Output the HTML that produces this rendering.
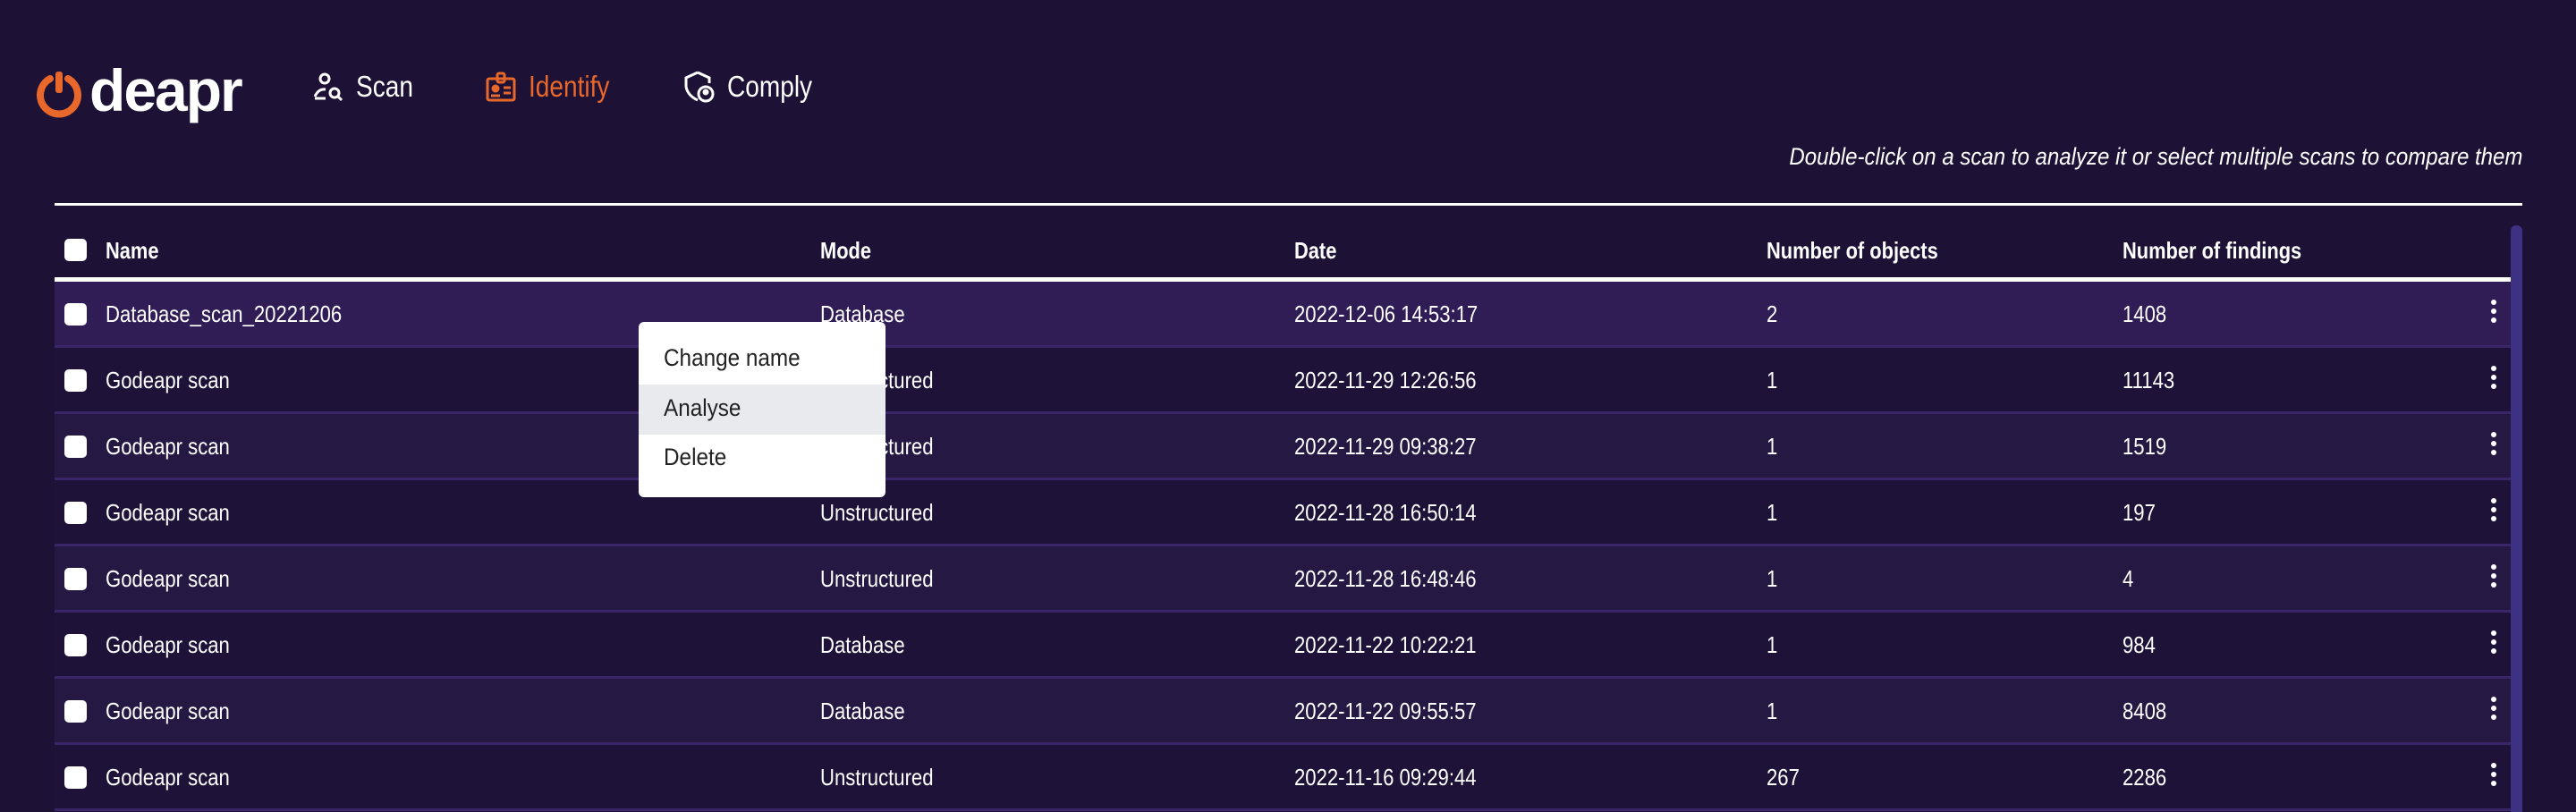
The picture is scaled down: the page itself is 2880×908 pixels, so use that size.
<!DOCTYPE html>
<html><head><meta charset="utf-8"><style>
*{margin:0;padding:0;box-sizing:border-box}
body{width:2880px;height:908px;overflow:hidden;background:#1d1235;font-family:"Liberation Sans Narrow","Liberation Sans",sans-serif;color:#fff;position:relative}
.abs{position:absolute}
.n{display:inline-block;transform:scaleX(.85);transform-origin:left center;white-space:nowrap}
.logo{top:68px;font-family:"Liberation Sans",sans-serif;font-weight:bold;font-size:66px;letter-spacing:-2px;line-height:66px}
.nav{top:76px;font-size:33px;line-height:42px;display:flex;align-items:center;gap:14px}
.hint{right:60px;top:160px;font-style:italic;font-size:27px;transform:scaleX(.89);transform-origin:right center;white-space:nowrap}
.topline{left:61px;top:227px;width:2759px;height:3px;background:#fff}
.hdr{top:262px;font-weight:bold;font-size:26px;line-height:36px;transform:scaleX(.84);transform-origin:left center;white-space:nowrap}
.hline{left:61px;top:310px;width:2746px;height:5px;background:#fff}
.row{position:absolute;left:61px;width:2746px;height:74px;border-bottom:3px solid #3a2568}
.row span{position:absolute;top:19px;font-size:26px;line-height:34px;transform:scaleX(.85);transform-origin:left center;white-space:nowrap}
.cb{position:absolute;left:11px;width:25px;height:25px;background:#fff;border-radius:5px}
.kb{position:absolute;left:2724px;top:20px;width:6px}
.kb i{display:block;width:6px;height:6px;border-radius:3px;background:#fff;margin-bottom:4px}
.menu{left:714px;top:360px;width:276px;height:196px;background:#fff;border-radius:6px;color:#222;font-size:27px}
.menu div{position:absolute;left:28px;transform:scaleX(.9);transform-origin:left center;white-space:nowrap}
</style></head><body>
<div class="abs" style="left:40px;top:76px"><svg width="52" height="56" viewBox="0 0 52 56"><path d="M16 12 A21 21 0 1 0 36 12" fill="none" stroke="#e8672a" stroke-width="8" stroke-linecap="round"/><rect x="22" y="4" width="8" height="24" rx="3" fill="#e8672a"/></svg></div>
<div class="abs logo" style="left:100px">deapr</div>
<div class="abs nav" style="left:350px"><svg width="34" height="34" viewBox="0 0 34 34" fill="none" stroke="#fff" stroke-width="3"><circle cx="13" cy="8" r="5"/><path d="M2 28 Q6 19 14 20"/><circle cx="24" cy="24" r="5"/><path d="M28 28 L32 32"/><path d="M2 30 L14 30"/></svg><span class="n">Scan</span></div>
<div class="abs nav" style="left:543px;color:#e8672a"><svg width="34" height="34" viewBox="0 0 34 34" fill="none" stroke="#e8672a" stroke-width="3"><rect x="2" y="8" width="30" height="24" rx="2"/><rect x="13" y="2" width="8" height="10" rx="2"/><circle cx="11" cy="19" r="3" fill="#e8672a"/><path d="M6 27 h10 M20 18 h8 M20 24 h8"/></svg><span class="n">Identify</span></div>
<div class="abs nav" style="left:765px"><svg width="34" height="36" viewBox="0 0 34 36" fill="none" stroke="#fff" stroke-width="3"><path d="M15 2 L28 8 V14 M15 2 L2 8 V18 Q4 28 15 33"/><circle cx="24" cy="26" r="8"/><circle cx="24" cy="24" r="2" fill="#fff"/></svg><span class="n">Comply</span></div>
<div class="abs hint">Double-click on a scan to analyze it or select multiple scans to compare them</div>
<div class="abs topline"></div>
<div class="abs" style="left:72px;top:267px;width:25px;height:25px;background:#fff;border-radius:5px"></div>
<div class="abs hdr" style="left:118px">Name</div>
<div class="abs hdr" style="left:917px">Mode</div>
<div class="abs hdr" style="left:1447px">Date</div>
<div class="abs hdr" style="left:1975px">Number of objects</div>
<div class="abs hdr" style="left:2373px">Number of findings</div>
<div class="abs hline"></div>
<div class="abs" style="left:2807px;top:252px;width:13px;height:656px;background:#3d3184;border-radius:6px 6px 0 0"></div>

<div class="row" style="top:315px;background:#301d55"><i class="cb" style="top:24px"></i><span style="left:57px">Database_scan_20221206</span><span style="left:856px">Database</span><span style="left:1386px">2022-12-06 14:53:17</span><span style="left:1914px">2</span><span style="left:2312px">1408</span><div class="kb"><i></i><i></i><i></i></div></div>
<div class="row" style="top:389px;background:#1e1238"><i class="cb" style="top:24px"></i><span style="left:57px">Godeapr scan</span><span style="left:856px">Unstructured</span><span style="left:1386px">2022-11-29 12:26:56</span><span style="left:1914px">1</span><span style="left:2312px">11143</span><div class="kb"><i></i><i></i><i></i></div></div>
<div class="row" style="top:463px;background:#251843"><i class="cb" style="top:24px"></i><span style="left:57px">Godeapr scan</span><span style="left:856px">Unstructured</span><span style="left:1386px">2022-11-29 09:38:27</span><span style="left:1914px">1</span><span style="left:2312px">1519</span><div class="kb"><i></i><i></i><i></i></div></div>
<div class="row" style="top:537px;background:#1e1238"><i class="cb" style="top:24px"></i><span style="left:57px">Godeapr scan</span><span style="left:856px">Unstructured</span><span style="left:1386px">2022-11-28 16:50:14</span><span style="left:1914px">1</span><span style="left:2312px">197</span><div class="kb"><i></i><i></i><i></i></div></div>
<div class="row" style="top:611px;background:#251843"><i class="cb" style="top:24px"></i><span style="left:57px">Godeapr scan</span><span style="left:856px">Unstructured</span><span style="left:1386px">2022-11-28 16:48:46</span><span style="left:1914px">1</span><span style="left:2312px">4</span><div class="kb"><i></i><i></i><i></i></div></div>
<div class="row" style="top:685px;background:#1e1238"><i class="cb" style="top:24px"></i><span style="left:57px">Godeapr scan</span><span style="left:856px">Database</span><span style="left:1386px">2022-11-22 10:22:21</span><span style="left:1914px">1</span><span style="left:2312px">984</span><div class="kb"><i></i><i></i><i></i></div></div>
<div class="row" style="top:759px;background:#251843"><i class="cb" style="top:24px"></i><span style="left:57px">Godeapr scan</span><span style="left:856px">Database</span><span style="left:1386px">2022-11-22 09:55:57</span><span style="left:1914px">1</span><span style="left:2312px">8408</span><div class="kb"><i></i><i></i><i></i></div></div>
<div class="row" style="top:833px;background:#1e1238"><i class="cb" style="top:24px"></i><span style="left:57px">Godeapr scan</span><span style="left:856px">Unstructured</span><span style="left:1386px">2022-11-16 09:29:44</span><span style="left:1914px">267</span><span style="left:2312px">2286</span><div class="kb"><i></i><i></i><i></i></div></div>

<div class="abs menu">
<div style="top:25px">Change name</div>
<div style="left:0;top:70px;width:276px;height:56px;background:#e9eaee;transform:none"></div>
<div style="top:81px">Analyse</div>
<div style="top:136px">Delete</div>
</div>
</body></html>
